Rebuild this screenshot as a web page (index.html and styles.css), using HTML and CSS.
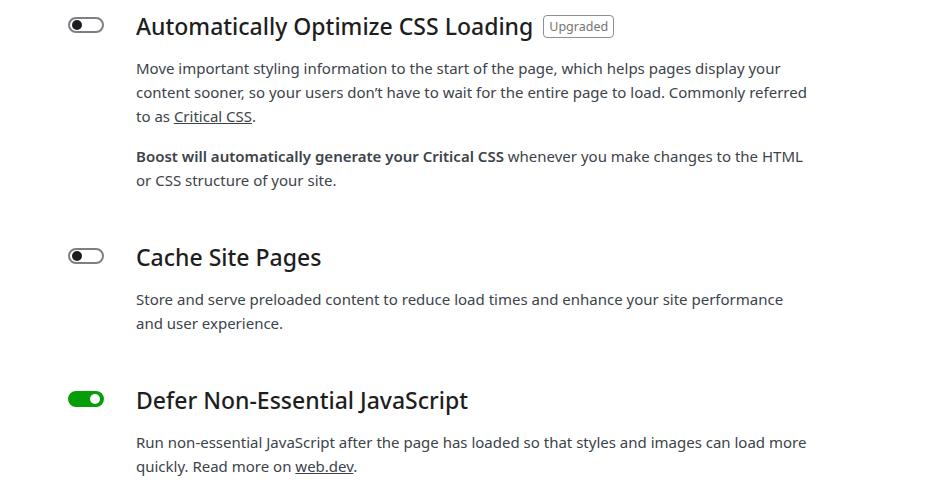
FILE: index.html
```html
<!DOCTYPE html>
<html lang="en">
<head>
  <meta charset="UTF-8">
  <meta name="viewport" content="width=device-width, initial-scale=1.0">
  <title>Boost Modules</title>
  <link rel="stylesheet" href="styles.css">
</head>
<body>
  <div class="modules">
    <div class="module">
      <div class="module-toggle">
        <span class="toggle"></span>
      </div>
      <div class="module-body">
        <h3 class="module-title">Automatically Optimize CSS Loading <span class="badge">Upgraded</span></h3>
        <p>Move important styling information to the start of the page, which helps pages display your content sooner, so your users don’t have to wait for the entire page to load. Commonly referred to as <a href="#">Critical CSS</a>.</p>
        <p><strong>Boost will automatically generate your Critical CSS</strong> whenever you make changes to the HTML or CSS structure of your site.</p>
      </div>
    </div>

    <div class="module">
      <div class="module-toggle">
        <span class="toggle"></span>
      </div>
      <div class="module-body">
        <h3 class="module-title">Cache Site Pages</h3>
        <p>Store and serve preloaded content to reduce load times and enhance your site performance and user experience.</p>
      </div>
    </div>

    <div class="module">
      <div class="module-toggle">
        <span class="toggle is-on"></span>
      </div>
      <div class="module-body">
        <h3 class="module-title">Defer Non-Essential JavaScript</h3>
        <p>Run non-essential JavaScript after the page has loaded so that styles and images can load more quickly. Read more on <a href="#">web.dev</a>.</p>
      </div>
    </div>
  </div>
</body>
</html>
```

FILE: styles.css
```css
body {
  margin: 0;
  background: #fff;
  color: #3c434a;
  font-family: "Noto Sans", sans-serif;
}

.modules {
  padding-left: 68px;
  width: 745px;
}

.module {
  display: flex;
  gap: 32px;
}

.module + .module {
  margin-top: 23px;
}

.module-toggle {
  padding-top: 17px;
}

.toggle {
  display: block;
  position: relative;
  width: 36px;
  height: 16px;
  box-sizing: border-box;
  border: 2px solid #7c7f84;
  border-radius: 9px;
  background: #fff;
}

.toggle::after {
  content: "";
  position: absolute;
  left: 2px;
  top: 1px;
  width: 10px;
  height: 10px;
  border-radius: 50%;
  background: #1e1e1e;
}

.toggle.is-on {
  border-color: #069e08;
  background: #069e08;
}

.toggle.is-on::after {
  left: auto;
  right: 2px;
  background: #fff;
}

.module-body {
  flex: 1;
}

.module-title {
  margin: 10px 0 14px;
  font-size: 23px;
  font-weight: 500;
  line-height: 32px;
  color: #1e1e1e;
  display: flex;
  align-items: center;
  gap: 10px;
}

.badge {
  font-size: 12.5px;
  font-weight: 400;
  line-height: 21px;
  padding: 0 5px;
  color: #757575;
  border: 1px solid #8c8f94;
  border-radius: 4px;
}

.module-body p {
  margin: 0 0 16px;
  font-size: 15px;
  line-height: 24px;
}

.module-body strong {
  font-weight: 600;
}

.module-body a {
  color: inherit;
}
```
